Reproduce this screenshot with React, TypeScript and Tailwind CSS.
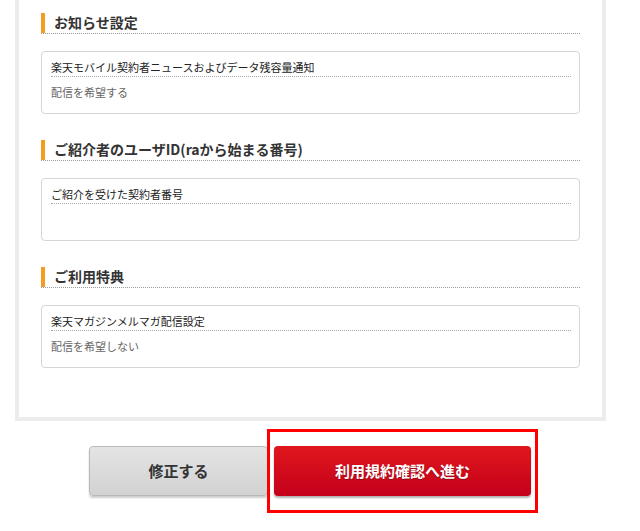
import clsx from "clsx"
import { FC } from "react"

const font = "font-['Noto_Sans_CJK_JP','Noto_Sans',sans-serif]"

interface SectionProps {
  title: string
  label: string
  value?: string
  first?: boolean
}

const Section: FC<SectionProps> = ({ title, label, value, first }) => (
  <section className={clsx(!first && "mt-[26px]")}>
    {/* Heading */}
    <h2
      className={clsx(
        "flex items-stretch h-[21px]",
        "border-b border-dotted border-[#9a9a9a]",
        "text-[14px] leading-[18px] font-bold text-[#333]"
      )}
    >
      <span className="w-[4px] bg-[#f39c1f]" />
      <span className="pl-[9px]">{title}</span>
    </h2>
    {/* Box */}
    <div className="mt-[17px] h-[63px] rounded-[4px] border border-[#d6d6d6] pt-[7px] pl-[9px] pr-[8px]">
      <div className="border-b border-dotted border-[#a8a8a8] pb-px text-[11px] leading-[16px] text-[#222]">
        {label}
      </div>
      {value && (
        <div className="mt-[7px] text-[11px] leading-[16px] text-[#666]">{value}</div>
      )}
    </div>
  </section>
)

export default function App() {
  return (
    <div className={clsx("w-[640px] h-[531px] bg-white overflow-hidden", font)}>
      {/* Panel */}
      <div className="ml-[15px] w-[591px] border-x-4 border-b-4 border-[#ececec] pt-[13px] pb-[49px] pl-[22px] pr-[22px]">
        <Section
          first
          title="お知らせ設定"
          label="楽天モバイル契約者ニュースおよびデータ残容量通知"
          value="配信を希望する"
        />
        <Section title="ご紹介者のユーザID(raから始まる番号)" label="ご紹介を受けた契約者番号" />
        <Section title="ご利用特典" label="楽天マガジンメルマガ配信設定" value="配信を希望しない" />
      </div>

      {/* Buttons */}
      <div className="mt-[8px] flex items-center">
        <button
          className={clsx(
            "ml-[89px] w-[179px] h-[50px] rounded-[4px]",
            "border border-[#b9b9b9] bg-gradient-to-b from-[#e4e4e4] to-[#d2d2d2]",
            "shadow-[0_2px_2px_rgba(0,0,0,0.2)]",
            "text-[15px] font-bold text-[#333]"
          )}
        >
          修正する
        </button>
        <div className="-ml-px border-[3px] border-[#ff0000] px-[4px] py-[14px]">
          <button
            className={clsx(
              "w-[257px] h-[50px] rounded-[4px]",
              "bg-gradient-to-b from-[#e0161c] to-[#c4001b]",
              "shadow-[0_2px_2px_rgba(0,0,0,0.3)]",
              "text-[15px] font-bold text-white [text-shadow:0_1px_1px_rgba(0,0,0,0.3)]"
            )}
          >
            利用規約確認へ進む
          </button>
        </div>
      </div>
    </div>
  )
}
